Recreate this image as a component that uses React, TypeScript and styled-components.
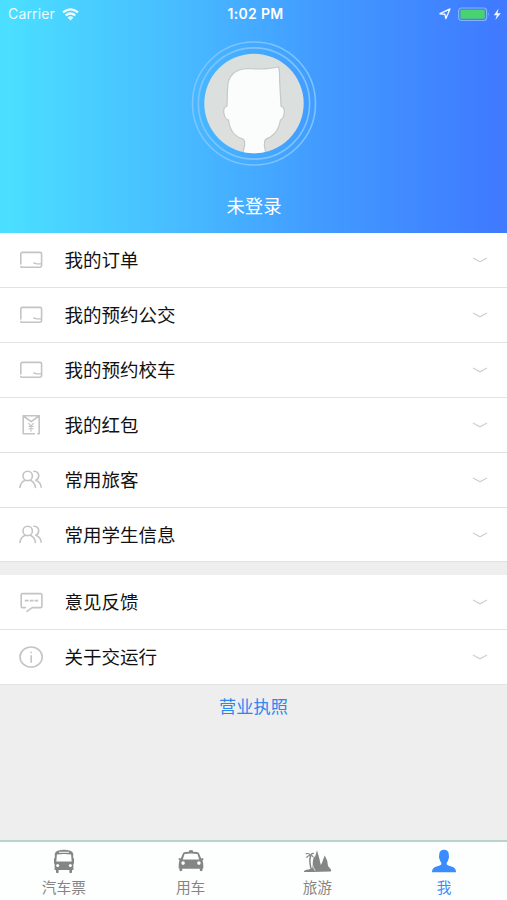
import React from 'react';
import styled, { createGlobalStyle } from 'styled-components';

const GlobalStyle = createGlobalStyle`
  * { box-sizing: border-box; }
  body {
    margin: 0;
    background: #eeeeee;
    font-family: Inter, "Noto Sans CJK SC", sans-serif;
  }
`;

const Screen = styled.div`
  display: flex;
  flex-direction: column;
  width: 100%;
  height: 900px;
  background: #eeeeee;
  overflow: hidden;
`;

const Header = styled.header`
  display: flex;
  flex-direction: column;
  align-items: center;
  height: 233px;
  flex: none;
  color: #fff;
  background: linear-gradient(90deg, #4adeff 2%, #48bdff 34%, #429cff 62%, #3f7aff 98%);
`;

const StatusBar = styled.div`
  display: grid;
  grid-template-columns: 1fr auto 1fr;
  align-items: center;
  width: 100%;
  height: 28px;
  padding: 0 4px 0 8px;
  font-size: 14px;
  line-height: 28px;
`;

const StatusSide = styled.div<{ $end?: boolean }>`
  display: flex;
  align-items: center;
  gap: 7px;
  justify-content: ${(p) => (p.$end ? 'flex-end' : 'flex-start')};
  opacity: 0.92;
  letter-spacing: 0.15px;
`;

const Clock = styled.div`
  font-size: 14px;
  font-weight: 600;
  letter-spacing: 0.3px;
`;

const Avatar = styled.svg`
  display: block;
  width: 126px;
  height: 126px;
  margin: 12px 0 0 1px;
`;

const UserName = styled.div`
  margin: 26.5px 0 0 1px;
  font-size: 18.4px;
  line-height: 27px;
`;

const Group = styled.section<{ $gap?: boolean }>`
  flex: none;
  margin-top: ${(p) => (p.$gap ? '13px' : '0')};
`;

const Row = styled.div<{ $h: number }>`
  display: flex;
  align-items: center;
  height: ${(p) => p.$h}px;
  padding: 0 18px;
  background: #fff;
  border-bottom: 1.5px solid #e2e2e2;
`;

const RowIcon = styled.svg`
  width: 26px;
  height: 26px;
  margin-right: 20.5px;
  fill: none;
  stroke: #c4c4c4;
  stroke-width: 1.6;
  stroke-linecap: round;
  stroke-linejoin: round;
`;

const RowLabel = styled.span`
  flex: 1;
  font-size: 18.5px;
  line-height: 28px;
  color: #111;
`;

const Chevron = styled.svg`
  width: 18px;
  height: 8px;
  fill: none;
  stroke: #cfcfcf;
  stroke-width: 1.3;
`;

const License = styled.div`
  flex: 1;
  padding-top: 9px;
  text-align: center;
  font-size: 17.2px;
  line-height: 26px;
  color: #2b87f0;
`;

const TabBar = styled.nav`
  display: grid;
  grid-template-columns: repeat(4, 1fr);
  flex: none;
  height: 60px;
  border-top: 2px solid #b9d4c7;
  background: #fdfffe;
`;

const Tab = styled.div<{ $active?: boolean }>`
  display: flex;
  flex-direction: column;
  align-items: center;
  padding: 6px 0 0 1px;
  font-size: 14.7px;
  line-height: 20px;
  color: ${(p) => (p.$active ? '#3b8dff' : '#858585')};
`;

const TabIcon = styled.svg`
  width: 30px;
  height: 28px;
  margin-bottom: 2px;
  fill: currentColor;
`;

const CardIcon = () => (
  <RowIcon viewBox="0 0 26 26">
    <path d="M2.8 17V7.2Q2.8 5.4 4.6 5.4H22Q23.6 5.4 23.6 7V18.6Q23.6 20.2 22 20.2H4Q2.8 20.2 2.8 19.5" />
    <path strokeWidth="1.3" d="M15.8 16L18.8 16.8H23" />
  </RowIcon>
);

const PacketIcon = () => (
  <RowIcon viewBox="0 0 26 26">
    <path d="M16.4 21.7H5.2V3.8H21.2V21.7H19.8M5.4 4L13.2 9.6L21 4" />
    <path strokeWidth="1.1" d="M10.8 11.3L13 14L15.3 11.3M13 14V19.3M11 14.4H15.2M11 16.7H15.2" />
  </RowIcon>
);

const PeopleIcon = () => (
  <RowIcon viewBox="0 0 26 26">
    <circle cx="9.7" cy="8.9" r="4.7" />
    <path d="M2 20.5Q2.6 14.8 7.3 13.2M12.2 13.2Q16.8 15 17.4 20.5M15.9 4.2Q20.7 4.3 20.7 8.8Q20.7 12.3 17.8 13.2Q22.5 14.8 23.2 20.2" />
  </RowIcon>
);

const MessageIcon = () => (
  <RowIcon viewBox="0 0 26 26">
    <path d="M7.4 18.6H4.2Q3.2 18.6 3.2 17.6V5.8Q3.2 4.6 4.4 4.6H22.6Q23.9 4.6 23.9 5.8V17.4Q23.9 18.6 22.7 18.6H14.2L9 22.3" />
    <path strokeLinecap="butt" strokeDasharray="3.8 1.1" d="M6.8 11.6H20.2" />
  </RowIcon>
);

const InfoIcon = () => (
  <RowIcon viewBox="0 0 26 26">
    <ellipse cx="13.1" cy="13" rx="11.1" ry="10" />
    <path d="M13.2 11.9V18.2M13.2 8.4V8.6" />
  </RowIcon>
);

const BusIcon = () => (
  <TabIcon viewBox="0 0 30 28">
    <path fillRule="evenodd" d="M8 3Q15 .7 22 3Q24 3.8 24.2 6V10L25 10.4V15.4L24.4 16V22H23V24.6Q21.6 26 20.4 24.6V22H9.6V24.6Q8.2 26 7 24.6V22H5.6V16L5 15.4V10.4L5.8 10V6Q6 3.8 8 3ZM10 3.8V4.7H20V3.8ZM7.9 6.6L7.3 13.4H22.7L22.1 6.6Q15 5.4 7.9 6.6Z" />
    <circle cx="8.7" cy="17.6" r="1.5" fill="#fff" />
    <circle cx="21.3" cy="17.6" r="1.5" fill="#fff" />
  </TabIcon>
);

const TaxiIcon = () => (
  <TabIcon viewBox="0 0 30 28">
    <path fillRule="evenodd" d="M13 3.7V2.5Q15 1.3 17 2.5V3.7Q22 3.7 22.9 5L25.2 10.5L27.3 10V12L26.3 12.5Q27.5 14 27.3 20.5H26.5V22.5Q25.2 24 23.8 22.5V20.8H6.2V22.5Q4.8 24 3.5 22.5V20.5H2.7Q2.5 14 3.7 12.5L2.7 12V10L4.8 10.5L7.1 5Q8 3.7 13 3.7ZM8.6 6L6.8 11.6H23.2L21.4 6Q15 4.9 8.6 6Z" />
    <circle cx="7.1" cy="15.1" r="1.8" fill="#fff" />
    <circle cx="22.9" cy="15.1" r="1.8" fill="#fff" />
  </TabIcon>
);

const TravelIcon = () => (
  <TabIcon viewBox="0 0 30 28">
    <path d="M10.6 24C9.8 17 10.6 12 12.2 8.5L13 9L15 2.2L17.2 10L18.8 17L20.4 14L21.3 11L22.8 7.6L25.3 13L26 18L28.6 21Q30 23 28.6 23.6Z" />
    <path d="M1.8 24Q2 22 6.5 21.6L11 20V24Z" />
    <path fill="none" stroke="currentColor" strokeWidth="1.5" d="M8.6 7.5Q6.8 14 9.5 22" />
    <path fill="none" stroke="currentColor" strokeWidth="1.1" d="M3.6 5.8Q7 4.6 8.6 7.5Q5.2 7.4 4.6 9.8M8.6 7.5Q9.6 4.8 12 5.6M8.6 7.5Q10.8 7.4 11.4 9.4" />
    <path fill="none" stroke="#fff" strokeWidth=".7" d="M10.6 10.5Q8.7 16 13.2 22.7" />
  </TabIcon>
);

const PersonIcon = () => (
  <TabIcon viewBox="0 0 30 28">
    <path d="M10.2 6.4Q10.4 1.7 15 1.7T19.8 6.4L19.9 8.3Q20.5 9 19.6 10.4Q19 13.5 17.7 14.8V16.5Q18.5 17.6 22.5 18.4Q27 19.3 27 24.2H3Q3 19.3 7.5 18.4Q11.5 17.6 12.3 16.5V14.8Q11 13.5 10.4 10.4Q9.5 9 10.1 8.3Z" />
  </TabIcon>
);

const groups = [
  [
    { label: '我的订单', Icon: CardIcon, h: 55 },
    { label: '我的预约公交', Icon: CardIcon, h: 55 },
    { label: '我的预约校车', Icon: CardIcon, h: 55 },
    { label: '我的红包', Icon: PacketIcon, h: 55 },
    { label: '常用旅客', Icon: PeopleIcon, h: 55 },
    { label: '常用学生信息', Icon: PeopleIcon, h: 54 },
  ],
  [
    { label: '意见反馈', Icon: MessageIcon, h: 55 },
    { label: '关于交运行', Icon: InfoIcon, h: 55 },
  ],
];

const tabs = [
  { label: '汽车票', Icon: BusIcon },
  { label: '用车', Icon: TaxiIcon },
  { label: '旅游', Icon: TravelIcon },
  { label: '我', Icon: PersonIcon, active: true },
];

export default function App() {
  return (
    <>
      <GlobalStyle />
      <Screen>
        <Header>
          <StatusBar>
            <StatusSide>
              <span>Carrier</span>
              <svg width="17" height="13" viewBox="0 0 17 13" fill="none" stroke="#fff" strokeWidth="2.3">
                <path d="M1 4.4Q8.5-1.7 16 4.4M3.7 7.3Q8.5 3.6 13.3 7.3" />
                <path fill="#fff" stroke="none" d="M5.6 9.4Q8.5 7.3 11.4 9.4L8.5 12.4Z" />
              </svg>
            </StatusSide>
            <Clock>1:02 PM</Clock>
            <StatusSide $end>
              <svg width="12" height="12" viewBox="0 0 12 12" fill="none" stroke="#fff" strokeWidth="1.4" strokeLinejoin="round">
                <path d="M1 5.7L11 1L6.9 10.6L5.9 6.2Z" />
              </svg>
              <svg width="45" height="15" viewBox="0 0 45 15">
                <rect x="0.6" y="1" width="28" height="12.5" rx="3" fill="none" stroke="#8db8ff" strokeWidth="1.2" />
                <rect x="2.4" y="2.8" width="24.4" height="8.9" rx="1.2" fill="#4cd964" />
                <path d="M30.2 5.2Q32 7.2 30.2 9.2Z" fill="#8db8ff" />
                <path d="M40.6 1.5L35.8 8.2H38.8L37.4 13L42.8 6.3H39.5Z" fill="#fff" />
              </svg>
            </StatusSide>
          </StatusBar>
          <Avatar viewBox="0 0 126 126">
            <defs>
              <clipPath id="face"><circle cx="63" cy="63.5" r="49.7" /></clipPath>
              <linearGradient id="backdrop" x1="0" y1="0" x2="0" y2="1">
                <stop offset="0" stopColor="#d9dfdd" />
                <stop offset="1" stopColor="#dedfdd" />
              </linearGradient>
            </defs>
            <circle cx="63" cy="63.5" r="61.5" fill="none" stroke="#7dc4ff" strokeWidth="1.6" />
            <circle cx="63" cy="63.5" r="55.6" fill="none" stroke="#7dc4ff" strokeWidth="1.6" />
            <circle cx="63" cy="63.5" r="49.7" fill="url(#backdrop)" />
            <path
              clipPath="url(#face)"
              fill="#fbfcfc"
              stroke="#c2c9c8"
              strokeWidth="1.2"
              d="M36 66L36.5 49Q36.5 29.5 57 28.5Q71 29.5 78 28.5Q84 28 87.5 26.8Q88.8 31 88.6 40L90 66Q94 68 93.3 72.5Q92.5 79 89.5 80Q88 88 84 93Q79 98 75 99Q73 101 73.5 106L75.5 118H50.5L53.5 106Q54.3 101 52 99Q46 97.5 42 92.5Q38 87 37.5 80Q34 79.5 32.8 73Q32 67.5 36 66Z"
            />
          </Avatar>
          <UserName>未登录</UserName>
        </Header>
        {groups.map((rows, i) => (
          <Group key={i} $gap={i > 0}>
            {rows.map(({ label, Icon, h }) => (
              <Row key={label} $h={h}>
                <Icon />
                <RowLabel>{label}</RowLabel>
                <Chevron viewBox="0 0 18 8"><path d="M2 2L9 5.8L16 2" /></Chevron>
              </Row>
            ))}
          </Group>
        ))}
        <License>营业执照</License>
        <TabBar>
          {tabs.map(({ label, Icon, active }) => (
            <Tab key={label} $active={active}>
              <Icon />
              {label}
            </Tab>
          ))}
        </TabBar>
      </Screen>
    </>
  );
}
